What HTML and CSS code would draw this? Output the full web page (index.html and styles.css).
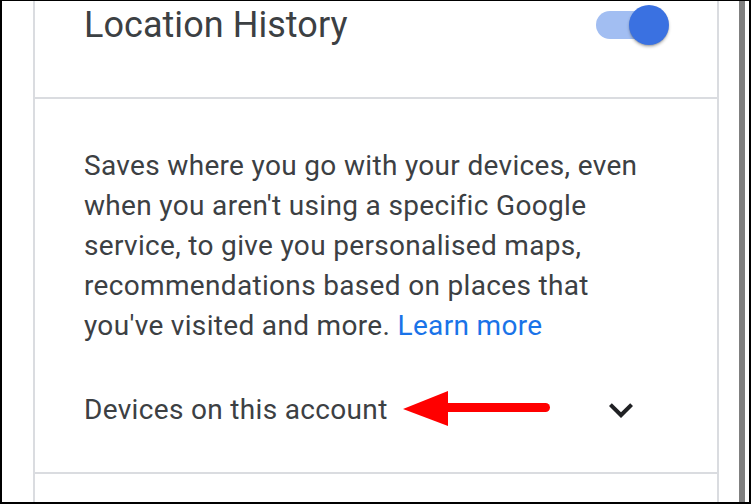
FILE: index.html
```html
<!DOCTYPE html>
<html lang="en">
<head>
<meta charset="utf-8">
<title>Location History</title>
<link rel="stylesheet" href="styles.css">
</head>
<body>
<div class="frame">
  <div class="gutter"></div>
  <div class="panel">
    <div class="head">
      <h1 class="title">Location History</h1>
      <div class="toggle" role="switch" aria-checked="true">
        <div class="track"></div>
        <div class="thumb"></div>
      </div>
    </div>
    <div class="body">
      <p class="desc">Saves where you go with your devices, even when you aren't using a specific Google service, to give you personalised maps, recommendations based on places that you've visited and more. <a class="link" href="#">Learn more</a></p>
      <div class="row">
        <span class="row-label">Devices on this account</span>
        <svg class="chev" viewBox="0 0 24 24" width="48" height="48" aria-hidden="true"><path d="M16.59 8.59L12 13.17 7.41 8.59 6 10l6 6 6-6z" fill="#202124"/></svg>
      </div>
      <svg class="arrow" viewBox="0 0 155 42" width="155" height="42" aria-hidden="true">
        <polygon points="3,21 48,3 48,38" fill="#ff0000"/>
        <line x1="46" y1="19.5" x2="145.5" y2="19.5" stroke="#ff0000" stroke-width="9" stroke-linecap="round"/>
      </svg>
    </div>
    <div class="foot"></div>
  </div>
  <div class="space"></div>
  <div class="scrollbar"></div>
  <div class="edge"></div>
</div>
</body>
</html>
```
FILE: styles.css
```css
* { box-sizing: border-box; }
html, body { margin: 0; padding: 0; background: #fff; }
body { font-family: Roboto, "Liberation Sans", Arial, sans-serif; color: #3c4043; }
.frame {
  width: 751px; height: 504px;
  border-top: 1px solid #000;
  border-left: 2px solid #000;
  border-bottom: 2px solid #000;
  border-right: 2px solid #000;
  display: flex;
  overflow: hidden;
}
.gutter { width: 31px; flex: none; }
.panel {
  width: 686px; flex: none;
  border-left: 2px solid #dadce0;
  border-right: 2px solid #dadce0;
  display: flex; flex-direction: column;
}
.space { width: 20px; flex: none; }
.scrollbar { width: 6px; flex: none; background: #808080; }
.edge { flex: 1; }
.head {
  height: 98px; flex: none;
  border-bottom: 2px solid #dadce0;
  display: flex; justify-content: space-between; align-items: flex-start;
  padding: 0 48px 0 49px;
}
.title {
  margin: 0; font-weight: 400; font-size: 36px; line-height: 48px;
  color: #3c4043; letter-spacing: 0.05px;
}
.toggle { position: relative; width: 73px; height: 41px; margin-top: 4px; }
.track {
  position: absolute; left: 0; top: 6px;
  width: 60px; height: 28px; border-radius: 14px; background: #a2bef2;
}
.thumb {
  position: absolute; right: 0; top: 0;
  width: 40px; height: 40px; border-radius: 50%;
  background: #3a71e1;
  box-shadow: 0 2px 3px rgba(0,0,0,0.25), 0 1px 1px rgba(0,0,0,0.12);
}
.body {
  position: relative;
  height: 375px; flex: none;
  border-bottom: 2px solid #dadce0;
  padding: 47px 48px 0 49px;
}
.desc {
  margin: 0; max-width: 570px;
  font-size: 28px; line-height: 40px; letter-spacing: 0.33px; color: #3c4043;
}
.link { color: #1a73e8; text-decoration: none; }
.row {
  margin-top: 44px;
  display: flex; justify-content: space-between; align-items: flex-start;
  padding-right: 24px;
}
.row-label { font-size: 28px; line-height: 40px; letter-spacing: 0.33px; color: #3c4043; }
.chev { display: block; margin-top: -4px; }
.arrow { position: absolute; left: 365px; top: 289px; }
.foot { flex: 1; }
```
